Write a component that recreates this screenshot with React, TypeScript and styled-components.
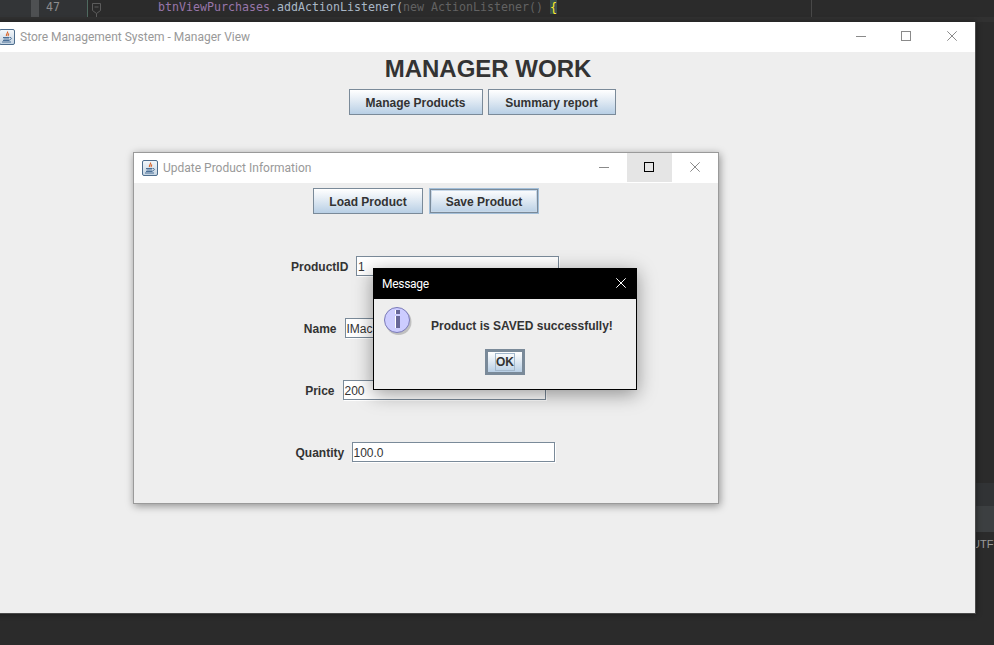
import React from "react";
import styled, { createGlobalStyle } from "styled-components";

const Global = createGlobalStyle`
  html, body { margin: 0; padding: 0; background: #2b2b2b; overflow: hidden; }
  #root { width: 994px; height: 645px; }
  * { box-sizing: border-box; }
`;

const Desktop = styled.div`
  position: relative;
  width: 994px;
  height: 645px;
  overflow: hidden;
  background: #2b2b2b;
  display: flex;
  flex-direction: column;
`;

const CodeBar = styled.div`
  display: flex;
  height: 17px;
  flex: none;
  background: #2b2b2b;
  font: 11.63px/14px "DejaVu Sans Mono", monospace;
  color: #a9b7c6;
`;
const SideGutter = styled.div`
  width: 39px;
  background: #333537;
  border-right: 8px solid #4e5052;
`;
const LineNumbers = styled.div`
  width: 49px;
  padding-left: 7px;
  color: #8c8c8c;
  background: #313335;
  border-right: 1px solid #4f6a60;
`;
const Fold = styled.div`
  width: 70px;
  padding-left: 3px;
  background: #2b2b2b;
  svg { display: block; }
`;
const Code = styled.div`
  width: 654px;
  white-space: pre;
  border-right: 1px solid #484848;
`;
const FieldName = styled.span`color: #9876aa;`;
const Dim = styled.span`color: #626262;`;
const Brace = styled.span`
  color: #ffef28;
  background: #3b514d;
`;
const StripBelowCode = styled.div`
  height: 5px;
  flex: none;
  background: #313131;
`;
const RightBands = styled.div`
  margin-top: 461px;
  display: flex;
  flex-direction: column;
  flex: none;
`;
const Band = styled.div<{ $h: number; $bg: string }>`
  height: ${(p) => p.$h}px;
  background: ${(p) => p.$bg};
`;
const Encoding = styled.div`
  padding: 5px 0 0 972px;
  font: 11px/14px "Liberation Sans", sans-serif;
  color: #9a9a9a;
  white-space: nowrap;
`;

const Win = styled.div<{ $x: number; $y: number; $w: number; $h: number; $z?: number }>`
  position: absolute;
  left: ${(p) => p.$x}px;
  top: ${(p) => p.$y}px;
  width: ${(p) => p.$w}px;
  height: ${(p) => p.$h}px;
  display: flex;
  flex-direction: column;
  background: #eeeeee;
  z-index: ${(p) => p.$z ?? 1};
`;
const MainWin = styled(Win)`
  border-right: 1px solid #4a4a4a;
  border-bottom: 1px solid #4a4a4a;
  box-shadow: 0 0 6px rgba(0, 0, 0, 0.45);
`;
const InnerWin = styled(Win)`
  border: 1px solid #9a9a9a;
  box-shadow: 1px 2px 8px rgba(0, 0, 0, 0.4);
`;
const DialogWin = styled(Win)`
  border: 1px solid #000;
  box-shadow: 0 4px 18px rgba(0, 0, 0, 0.4);
`;
const TitleBar = styled.div`
  height: 30px;
  flex: none;
  display: flex;
  align-items: center;
  background: #fff;
  padding-left: 8px;
`;
const TitleText = styled.div`
  flex: 1;
  margin-left: 5px;
  font: 12px Roboto, sans-serif;
  color: #999999;
  white-space: nowrap;
`;
const Ctrl = styled.div<{ $hover?: boolean; $nudge?: boolean }>`
  width: 46px;
  height: 30px;
  padding-bottom: 2px;
  padding-left: ${(p) => (p.$nudge ? 2 : 0)}px;
  padding-right: ${(p) => (p.$hover ? 1 : 0)}px;
  display: flex;
  align-items: center;
  justify-content: center;
  background: ${(p) => (p.$hover ? "#e5e5e5" : "transparent")};
  border-left: ${(p) => (p.$hover ? "1px solid #fff" : "none")};
  border-bottom: ${(p) => (p.$hover ? "1px solid #fff" : "none")};
`;
const DialogTitle = styled.div`
  height: 30px;
  flex: none;
  display: flex;
  align-items: center;
  justify-content: space-between;
  padding: 0 10px 0 8px;
  background: #000;
  font: 12px Roboto, sans-serif;
  letter-spacing: -0.3px;
  color: #fff;
`;
const DialogClose = styled.span`
  display: flex;
  margin-bottom: 2px;
`;
const Heading = styled.h1`
  margin: 2px 0 0;
  padding-left: 10px;
  text-align: center;
  font: bold 24px/29px "Liberation Sans", sans-serif;
  color: #333333;
`;
const ButtonBar = styled.div<{ $top: number; $pull?: number }>`
  display: flex;
  justify-content: center;
  gap: 5px;
  margin-top: ${(p) => p.$top}px;
  padding-right: ${(p) => p.$pull ?? 0}px;
`;
const Btn = styled.div<{ $w: number; $focus?: boolean }>`
  width: ${(p) => p.$w}px;
  height: 26px;
  padding-top: 1px;
  display: flex;
  align-items: center;
  justify-content: center;
  border: 1px solid ${(p) => (p.$focus ? "#a3bfd9" : "#7a8a99")};
  background: linear-gradient(#ffffff 0%, #e8eff6 35%, #b8cfe5 100%);
  font: bold 12px "Liberation Sans", sans-serif;
  color: #333333;
  box-shadow: ${(p) => (p.$focus ? "inset 0 0 0 1px #7a8a99, inset 0 0 0 2px #c8d8e8" : "none")};
  margin-left: ${(p) => (p.$focus ? 1 : 0)}px;
`;
const FormStack = styled.div`
  display: flex;
  flex-direction: column;
  gap: 42px;
  margin-top: 42px;
  padding-right: 2px;
`;
const FormRow = styled.div`
  display: flex;
  justify-content: center;
  align-items: center;
  gap: 8px;
  height: 20px;
`;
const Label = styled.span<{ $w: number }>`
  width: ${(p) => p.$w}px;
  padding-top: 2px;
  text-align: right;
  white-space: nowrap;
  font: bold 12px "Liberation Sans", sans-serif;
  color: #333333;
`;
const Input = styled.div`
  width: 203px;
  height: 20px;
  padding-left: 1px;
  border: 1px solid #7a8a99;
  background: #fff;
  box-shadow: 1px 1px 0 #ffffff;
  font: 12px/20px "Liberation Sans", sans-serif;
  color: #333333;
`;
const DialogBody = styled.div`
  display: flex;
  flex-direction: column;
  align-items: center;
  flex: 1;
`;
const MessageRow = styled.div`
  display: flex;
  align-items: center;
  align-self: flex-start;
  padding: 8px 0 0 10px;
  gap: 17px;
`;
const Message = styled.span`
  font: bold 12px "Liberation Sans", sans-serif;
  color: #333333;
  margin-top: 8px;
`;
const OkBtn = styled.div`
  width: 40px;
  height: 26px;
  margin-top: 12px;
  border: 3px solid #7a8a99;
  background: linear-gradient(#ffffff 0%, #e8eff6 35%, #b8cfe5 100%);
  display: flex;
  align-items: center;
  justify-content: center;
  font: bold 12px "Liberation Sans", sans-serif;
  color: #333333;
`;
const OkFocus = styled.span`
  width: 20px;
  height: 18px;
  flex: none;
  display: flex;
  align-items: center;
  justify-content: center;
  border: 1px solid #a3b8cc;
`;

const JavaIcon = () => (
  <svg width="16" height="16" viewBox="0 0 16 16" style={{ flex: "none" }}>
    <defs>
      <linearGradient id="jbg" x1="0" y1="0" x2="0" y2="1">
        <stop offset="0" stopColor="#f4f8fb" />
        <stop offset="1" stopColor="#c3d3e2" />
      </linearGradient>
    </defs>
    <rect x="0.5" y="0.5" width="15" height="15" rx="1.5" fill="url(#jbg)" stroke="#4d6d8d" />
    <path d="M8.5 2.5c1 1.4-2 2.6-1 4.5M10 4.5c-1 .8-1.3 1.6-.6 2.6" fill="none" stroke="#d9662b" strokeWidth="1.2" />
    <path d="M4 8.5h6.5M4.5 10h5.5M4 11.5h6.5M3 13h9M11 8.5c2 0 2 2-.5 2.2" fill="none" stroke="#4a6f96" strokeWidth="1" />
  </svg>
);
const MinIcon = ({ c = "#8a8a8a" }: { c?: string }) => (
  <svg width="10" height="10" viewBox="0 0 10 10"><path d="M0 5.5h10" stroke={c} /></svg>
);
const MaxIcon = ({ c = "#8a8a8a" }: { c?: string }) => (
  <svg width="10" height="10" viewBox="0 0 10 10"><rect x=".5" y=".5" width="9" height="9" fill="none" stroke={c} /></svg>
);
const CloseIcon = ({ c = "#8a8a8a" }: { c?: string }) => (
  <svg width="10" height="10" viewBox="0 0 10 10"><path d="M.3.3l9.4 9.4M9.7.3L.3 9.7" stroke={c} /></svg>
);
const InfoIcon = () => (
  <svg width="30" height="30" viewBox="0 0 30 30" style={{ flex: "none", overflow: "visible" }}>
    <circle cx="14.5" cy="15" r="13" fill="#9a9a9a" opacity="0.55" />
    <circle cx="13" cy="13" r="12.5" fill="#ccccff" stroke="#7a7ab8" />
    <rect x="11" y="3" width="5" height="4" fill="#ffffff" />
    <rect x="12" y="3" width="4" height="4" fill="#666699" />
    <rect x="11" y="9" width="5" height="12" fill="#ffffff" />
    <rect x="12" y="9" width="4" height="12" fill="#666699" />
  </svg>
);

export default function App() {
  return (
    <Desktop>
      <Global />
      <CodeBar>
        <SideGutter />
        <LineNumbers>47</LineNumbers>
        <Fold>
          <svg width="12" height="17" viewBox="0 0 12 17">
            <path d="M1.5 3.5h8v7l-4 3-4-3zM3.5 7h4M5.5 13.5v4" fill="none" stroke="#5c5c5c" />
          </svg>
        </Fold>
        <Code>
          <FieldName>btnViewPurchases</FieldName>.addActionListener(<Dim>new ActionListener()</Dim> <Brace>{"{"}</Brace>
        </Code>
      </CodeBar>
      <StripBelowCode />
      <RightBands>
        <Band $h={23} $bg="#313335" />
        <Band $h={26} $bg="#3c3f41" />
        <Encoding>UTF</Encoding>
      </RightBands>

      <MainWin $x={-9} $y={22} $w={985} $h={592}>
        <TitleBar>
          <JavaIcon />
          <TitleText>Store Management System - Manager View</TitleText>
          <Ctrl $nudge><MinIcon /></Ctrl>
          <Ctrl><MaxIcon /></Ctrl>
          <Ctrl><CloseIcon /></Ctrl>
        </TitleBar>
        <Heading>MANAGER WORK</Heading>
        <ButtonBar $top={6} $pull={2}>
          <Btn $w={134}>Manage Products</Btn>
          <Btn $w={128}>Summary report</Btn>
        </ButtonBar>
      </MainWin>

      <InnerWin $x={133} $y={152} $w={586} $h={352} $z={2}>
        <TitleBar>
          <JavaIcon />
          <TitleText>Update Product Information</TitleText>
          <Ctrl $nudge><MinIcon /></Ctrl>
          <Ctrl $hover><MaxIcon c="#000" /></Ctrl>
          <Ctrl><CloseIcon /></Ctrl>
        </TitleBar>
        <ButtonBar $top={5}>
          <Btn $w={110}>Load Product</Btn>
          <Btn $w={110} $focus>Save Product</Btn>
        </ButtonBar>
        <FormStack>
          <FormRow><Label $w={57}>ProductID</Label><Input>1</Input></FormRow>
          <FormRow><Label $w={34}>Name</Label><Input>IMac</Input></FormRow>
          <FormRow><Label $w={30}>Price</Label><Input>200</Input></FormRow>
          <FormRow><Label $w={48}>Quantity</Label><Input>100.0</Input></FormRow>
        </FormStack>
      </InnerWin>

      <DialogWin $x={373} $y={268} $w={264} $h={122} $z={3}>
        <DialogTitle>
          Message
          <DialogClose><CloseIcon c="#fff" /></DialogClose>
        </DialogTitle>
        <DialogBody>
          <MessageRow>
            <InfoIcon />
            <Message>Product is SAVED successfully!</Message>
          </MessageRow>
          <OkBtn><OkFocus>OK</OkFocus></OkBtn>
        </DialogBody>
      </DialogWin>
    </Desktop>
  );
}
